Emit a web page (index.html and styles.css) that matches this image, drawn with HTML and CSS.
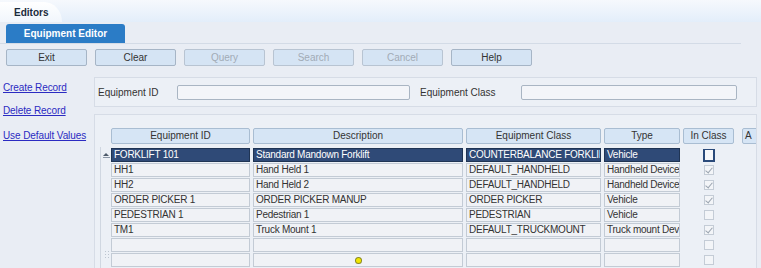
FILE: index.html
```html
<!DOCTYPE html>
<html lang="en">

<head>
    <meta charset="UTF-8" />
    <title>Equipment Editor</title>
    <link rel="stylesheet" href="styles.css">
</head>

<body>

    <div class="topbar">
        <div class="app-tab">Editors</div>
    </div>

    <div class="tabstrip">
        <div class="editor-tab">Equipment Editor</div>
    </div>

    <div class="toolbar">
        <button class="tool-btn">Exit</button>
        <button class="tool-btn">Clear</button>
        <button class="tool-btn" disabled>Query</button>
        <button class="tool-btn" disabled>Search</button>
        <button class="tool-btn" disabled>Cancel</button>
        <button class="tool-btn">Help</button>
    </div>

    <div class="main">
        <div class="links">
            <a href="#" class="link">Create Record</a>
            <a href="#" class="link">Delete Record</a>
            <a href="#" class="link link-gap">Use Default Values</a>
        </div>

        <div class="content">
            <div class="panel search-panel">
                <label class="field-label label-id" for="equip-id">Equipment ID</label>
                <input id="equip-id" class="field field-id" type="text" />
                <label class="field-label label-class" for="equip-class">Equipment Class</label>
                <input id="equip-class" class="field field-class" type="text" />
            </div>

            <div class="panel grid-panel">
                <div class="scroller">
                    <span class="arrow-up"></span>
                    <span class="grip"></span>
                </div>
                <div class="grid" id="grid">
                    <div class="head">Equipment ID</div>
                    <div class="head">Description</div>
                    <div class="head">Equipment Class</div>
                    <div class="head">Type</div>
                    <div class="head">In Class</div>
                    <div class="head head-more">A</div>
                </div>
            </div>
        </div>
    </div>

    <script>
        const rows = [
            ['FORKLIFT 101', 'Standard Mandown Forklift', 'COUNTERBALANCE FORKLIFT', 'Vehicle', false],
            ['HH1', 'Hand Held 1', 'DEFAULT_HANDHELD', 'Handheld Device', true],
            ['HH2', 'Hand Held 2', 'DEFAULT_HANDHELD', 'Handheld Device', true],
            ['ORDER PICKER 1', 'ORDER PICKER MANUP', 'ORDER PICKER', 'Vehicle', true],
            ['PEDESTRIAN 1', 'Pedestrian 1', 'PEDESTRIAN', 'Vehicle', false],
            ['TM1', 'Truck Mount 1', 'DEFAULT_TRUCKMOUNT', 'Truck mount Device', true],
            ['', '', '', '', false],
            ['', '', '', '', false],
            ['', '', '', '', false]
        ];
        const grid = document.getElementById('grid');

        rows.forEach((row, index) => {
            for (let i = 0; i < 4; i++) {
                const cell = document.createElement('div');
                cell.className = 'cell' + (index === 0 ? ' selected' : '');
                cell.textContent = row[i];
                // カーソルの点
                if (index === 7 && i === 1) {
                    cell.classList.add('cell-dot');
                    const dot = document.createElement('span');
                    dot.className = 'dot';
                    cell.appendChild(dot);
                }
                grid.appendChild(cell);
            }

            const checkCell = document.createElement('div');
            checkCell.className = 'check-cell';
            const box = document.createElement('span');
            box.className = 'check' + (index === 0 ? ' focused' : '') + (row[4] ? ' checked' : '');
            checkCell.appendChild(box);
            grid.appendChild(checkCell);

            grid.appendChild(document.createElement('div'));
        });
    </script>
</body>

</html>
```

FILE: styles.css
```css
* {
    box-sizing: border-box;
}

body {
    margin: 0;
    font-family: "Liberation Sans", Arial, sans-serif;
    font-size: 10px;
    color: #333;
    background-color: #e9edf4;
    height: 268px;
    overflow: hidden;
}

/* top application bar */
.topbar {
    height: 22px;
    background: linear-gradient(#f6f9fd, #e3eefa);
    display: flex;
    align-items: flex-end;
}

.app-tab {
    width: 62px;
    height: 20px;
    padding: 5px 0 0 14px;
    font-weight: bold;
    color: #1c2b3c;
    background: linear-gradient(#ffffff, #f1f6fc);
    border-top-right-radius: 18px 20px;
}

.tabstrip {
    height: 22px;
    margin-right: 20px;
    padding: 2px 0 0 6px;
    border-bottom: 1px solid #d3dbe6;
}

.editor-tab {
    width: 119px;
    height: 19px;
    line-height: 19px;
    text-align: center;
    font-weight: bold;
    color: #fff;
    background-color: #2b7cc6;
    border-radius: 3px 3px 0 0;
}

/* buttons */
.toolbar {
    display: flex;
    gap: 8px;
    padding: 5px 0 0 6px;
}

.tool-btn {
    width: 81px;
    height: 17px;
    padding: 0;
    font-family: "Liberation Sans", Arial, sans-serif;
    font-size: 10px;
    color: #333;
    background-color: #d5e4f4;
    border: 1px solid #a6b5c6;
    border-radius: 2px;
}

.tool-btn:disabled {
    color: #a2abb6;
    border-color: #b8c4d2;
}

/* main area */
.main {
    display: flex;
    margin-top: 11px;
}

.links {
    width: 94px;
    flex-shrink: 0;
    display: flex;
    flex-direction: column;
    align-items: flex-start;
    padding: 5px 0 0 3px;
    gap: 11px;
}

.link {
    color: #2b2bc2;
    font-size: 10px;
    line-height: 12px;
    white-space: nowrap;
    letter-spacing: -0.1px;
    text-decoration: underline;
}

.link-gap {
    margin-top: 2px;
}

.content {
    flex: 1;
    min-width: 0;
    margin-right: 4px;
}

.panel {
    background-color: #ecf0f6;
    border: 1px solid #d6dce6;
}

.search-panel {
    height: 30px;
    display: flex;
    align-items: center;
    padding-left: 3px;
}

.field-label {
    color: #333;
    flex-shrink: 0;
}

.label-id {
    width: 79px;
}

.label-class {
    width: 101px;
    margin-left: 10px;
}

.field {
    height: 15px;
    flex-shrink: 0;
    border: 1px solid #a9b5c3;
    border-radius: 2px;
    background-color: #f3f5f9;
    padding: 0 3px;
    font-size: 10px;
}

.field-id {
    width: 233px;
}

.field-class {
    width: 216px;
}

/* grid */
.grid-panel {
    margin-top: 7px;
    height: 160px;
    display: flex;
    padding: 13px 0 0 5px;
    overflow: hidden;
    border-bottom: none;
}

.scroller {
    width: 11px;
    flex-shrink: 0;
    margin-top: 19px;
    border-left: 1px solid #d0d7e1;
    display: flex;
    flex-direction: column;
    align-items: center;
}

.arrow-up {
    margin-top: 6px;
    width: 0;
    height: 0;
    border-left: 3px solid transparent;
    border-right: 3px solid transparent;
    border-bottom: 3px solid #4d5a6a;
}

.arrow-up::after {
    content: "";
    display: block;
    width: 7px;
    height: 1px;
    margin: 4px 0 0 -3px;
    background-color: #8a96a6;
}

.grip {
    margin-top: 94px;
    width: 5px;
    height: 10px;
    background-image: radial-gradient(circle, #bcc5d0 1px, transparent 1px);
    background-size: 3px 3px;
}

.grid {
    display: grid;
    flex-shrink: 0;
    grid-template-columns: 139px 210px 135px 76px 51px 40px;
    grid-template-rows: 19px;
    grid-auto-rows: 14px;
    column-gap: 3px;
    row-gap: 1px;
    align-content: start;
}

.head {
    grid-row: 1;
    height: 16px;
    line-height: 14px;
    margin-bottom: 3px;
    text-align: center;
    white-space: nowrap;
    color: #333;
    background-color: #d6e5f5;
    border: 1px solid #a9bdd2;
    border-radius: 2px;
}

.head-more {
    margin-left: 5px;
    text-align: left;
    padding-left: 2px;
}

.cell {
    height: 14px;
    line-height: 12px;
    padding: 0 2px;
    white-space: nowrap;
    overflow: hidden;
    letter-spacing: -0.25px;
    color: #333;
    background-color: #f0f2f6;
    border: 1px solid #c3cbd5;
}

.cell.selected {
    color: #fff;
    background-color: #2f4a77;
    border-color: #1f3454;
}

.cell-dot {
    text-align: center;
}

.dot {
    display: inline-block;
    width: 5px;
    height: 5px;
    margin-top: 3px;
    border-radius: 50%;
    background-color: #f2e600;
    box-shadow: 0 0 0 1px #8a8a20;
}

.check-cell {
    display: flex;
    justify-content: center;
    align-items: center;
}

.check {
    width: 10px;
    height: 10px;
    border: 1px solid #c4ccd6;
    background-color: #f3f5f8;
    position: relative;
}

.check.checked::after {
    content: "";
    position: absolute;
    left: 2px;
    top: 0;
    width: 3px;
    height: 6px;
    border-right: 1px solid #9aa4b0;
    border-bottom: 1px solid #9aa4b0;
    transform: rotate(40deg);
}

.check.focused {
    width: 12px;
    height: 13px;
    border: 2px solid #2a4a7a;
    border-top-width: 1px;
    background-color: #f7f8fa;
}
```
